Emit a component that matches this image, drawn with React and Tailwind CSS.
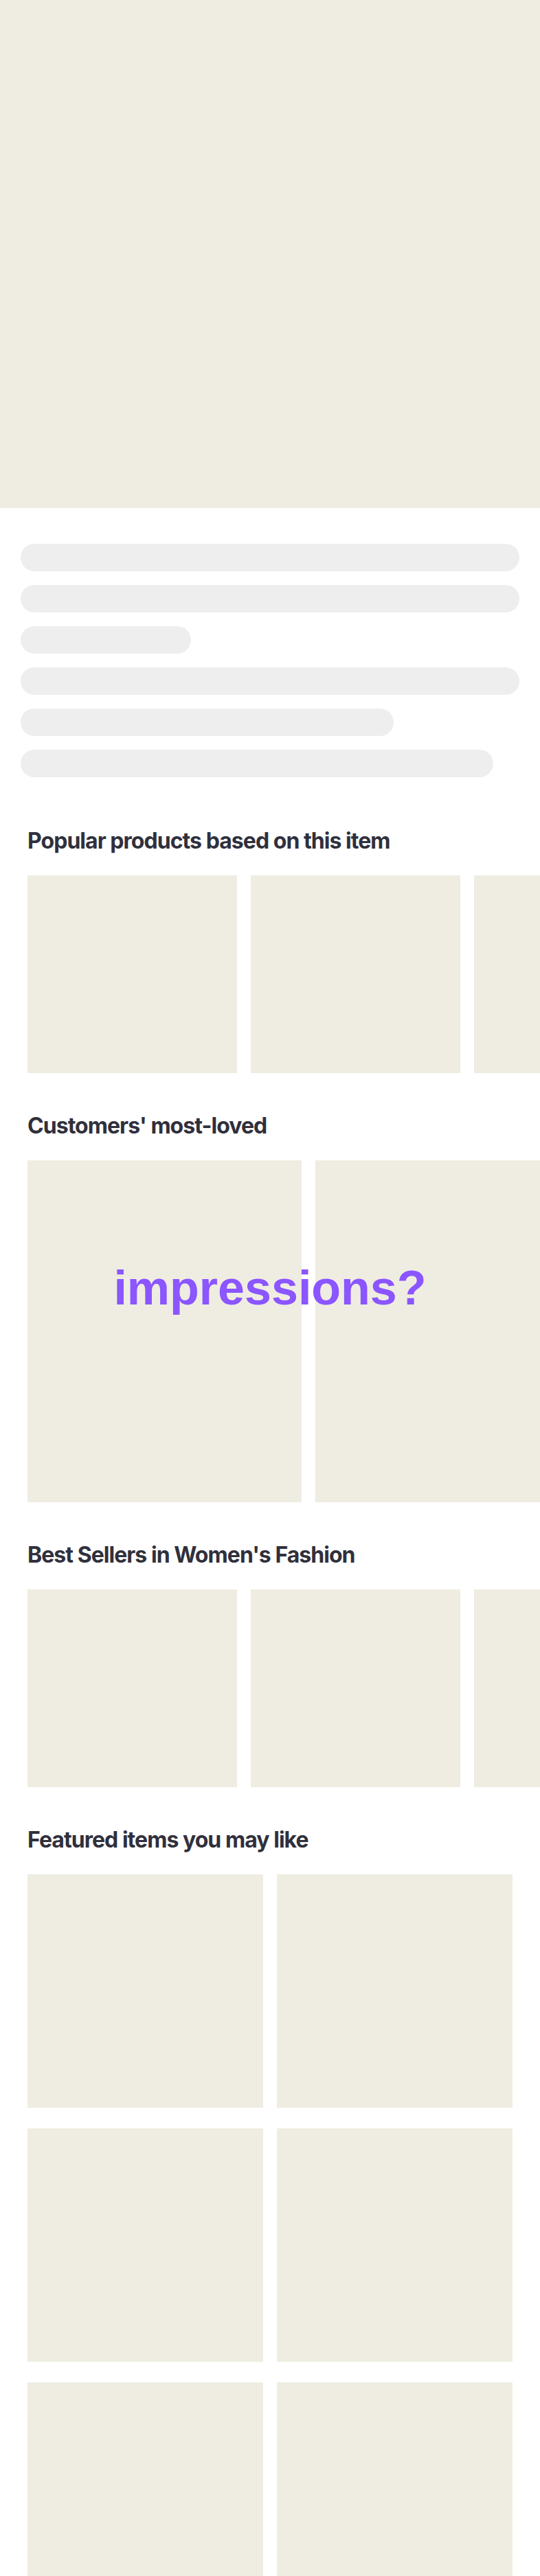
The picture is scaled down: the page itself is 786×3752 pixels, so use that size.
const BARS = ['w-full', 'w-full', 'w-[248px]', 'w-full', 'w-[543px]', 'w-[688px]']

const SECTIONS = [
  { title: 'Popular products based on this item', count: 3, card: 'w-[305px] h-[288px]' },
  { title: "Customers' most-loved", count: 2, card: 'w-[399px] h-[498px]' },
  { title: "Best Sellers in Women's Fashion", count: 3, card: 'w-[305px] h-[288px]' },
]

function Heading({ children, first }) {
  return (
    <h2
      className={`${first ? 'mt-[73px]' : 'mt-[57px]'} mb-[30px] px-10 text-[32px] leading-[40px] font-bold text-[#30303c] tracking-[-0.03em]`}
      style={{ fontFamily: 'Inter, "Noto Sans", sans-serif' }}
    >
      {children}
    </h2>
  )
}

function Carousel({ count, card }) {
  return (
    <div className="flex gap-5 pl-10 overflow-hidden">
      {Array.from({ length: count }).map((_, i) => (
        <div key={i} className={`${card} shrink-0 bg-[#efede1]`} />
      ))}
    </div>
  )
}

export default function App() {
  return (
    <div className="relative w-[786px] bg-white overflow-hidden">
      {/* Hero image placeholder */}
      <div className="h-[740px] bg-[#efede1]" />

      {/* Description skeleton */}
      <div className="flex flex-col gap-5 px-[30px] pt-[52px]">
        {BARS.map((w, i) => (
          <div key={i} className={`${w} h-10 rounded-full bg-[#eeeeee]`} />
        ))}
      </div>

      {SECTIONS.map((s, i) => (
        <section key={s.title}>
          <Heading first={i === 0}>{s.title}</Heading>
          <Carousel count={s.count} card={s.card} />
        </section>
      ))}

      <section>
        <Heading>Featured items you may like</Heading>
        <div className="grid grid-cols-2 gap-x-5 gap-y-[30px] px-10 pb-10">
          {Array.from({ length: 6 }).map((_, i) => (
            <div key={i} className="h-[340px] bg-[#efede1]" />
          ))}
        </div>
      </section>

      {/* Survey prompt overlay */}
      <div className="fixed inset-0 flex items-center justify-center pointer-events-none">
        <span
          className="text-[70px] font-bold text-[#8b55ff]"
          style={{ fontFamily: '"Liberation Sans", Arial, sans-serif' }}
        >
          impressions?
        </span>
      </div>
    </div>
  )
}
